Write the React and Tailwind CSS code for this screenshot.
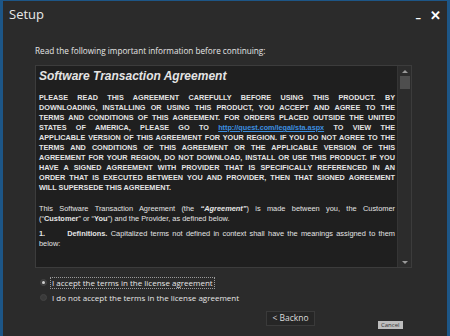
import React from 'react';

const J = ({ children, last = false, className = '' }) => (
  <div className={`whitespace-nowrap text-justify ${last ? '' : '[text-align-last:justify]'} ${className}`}>{children}</div>
);

const Radio = ({ checked, label }) => (
  <div className="flex items-center h-[15px]">
    <span className="w-[7px] h-[7px] rounded-full bg-[#3a3a3a] border border-[#444] flex items-center justify-center">
      {checked && <span className="w-[3px] h-[3px] rounded-full bg-[#cfcfcf]" />}
    </span>
    <span className={`ml-[4px] text-[8px] text-[#e6e6e6] leading-[10px] px-[1px] ${checked ? 'outline outline-1 outline-dotted outline-[#9a9a9a]' : ''}`}>
      {label}
    </span>
  </div>
);

export default function App() {
  return (
    <div className="w-[450px] h-[336px] bg-[#2b2b2b] border-l-[3px] border-r-[3px] border-t border-[#1d5687] flex flex-col overflow-hidden" style={{ fontFamily: '"Open Sans", "Noto Sans", sans-serif' }}>
      {/* title bar */}
      <div className="h-[28px] flex items-center justify-between pl-[6px] pr-[6px]">
        <span className="text-[13px] text-[#e8e8e8]">Setup</span>
        <div className="flex items-center gap-[9px] text-white font-bold">
          <span className="text-[11px] leading-none mt-[3px]">–</span>
          <span className="text-[13px] leading-none">✕</span>
        </div>
      </div>

      <div className="pl-[32px] pr-[35px] flex flex-col">
        <div className="text-[8.2px] text-[#e6e6e6] h-[14px] mt-[15px] leading-[14px]">Read the following important information before continuing:</div>

        {/* agreement box */}
        <div className="mt-[7px] h-[203px] bg-[#1f1f1f] border border-[#3c3c3c] flex" style={{ fontFamily: '"Liberation Sans", Arial, sans-serif' }}>
          <div className="flex-1 min-w-0 pl-[3px] pr-[2px] pt-[2px] text-[#e4e4e4] overflow-hidden">
            <div className="text-[12px] font-bold italic h-[17px] leading-[17px]">Software Transaction Agreement</div>
            <div className="mt-[8px] text-[7.25px] font-bold leading-[10px]">
              <J>PLEASE READ THIS AGREEMENT CAREFULLY BEFORE USING THIS PRODUCT. BY</J>
              <J>DOWNLOADING, INSTALLING OR USING THIS PRODUCT, YOU ACCEPT AND AGREE TO THE</J>
              <J>TERMS AND CONDITIONS OF THIS AGREEMENT. FOR ORDERS PLACED OUTSIDE THE UNITED</J>
              <J>STATES OF AMERICA, PLEASE GO TO <span className="text-[#3d8fe0] underline">http://quest.com/legal/sta.aspx</span> TO VIEW THE</J>
              <J>APPLICABLE VERSION OF THIS AGREEMENT FOR YOUR REGION. IF YOU DO NOT AGREE TO THE</J>
              <J>TERMS AND CONDITIONS OF THIS AGREEMENT OR THE APPLICABLE VERSION OF THIS</J>
              <J>AGREEMENT FOR YOUR REGION, DO NOT DOWNLOAD, INSTALL OR USE THIS PRODUCT. IF YOU</J>
              <J>HAVE A SIGNED AGREEMENT WITH PROVIDER THAT IS SPECIFICALLY REFERENCED IN AN</J>
              <J>ORDER THAT IS EXECUTED BETWEEN YOU AND PROVIDER, THEN THAT SIGNED AGREEMENT</J>
              <J last>WILL SUPERSEDE THIS AGREEMENT.</J>
            </div>
            <div className="mt-[11px] text-[7.4px] leading-[10px]">
              <J>This Software Transaction Agreement (the <b><i>“Agreement”</i></b>) is made between you, the Customer</J>
              <J last>(“<b>Customer</b>” or “<b>You</b>”) and the Provider, as defined below.</J>
            </div>
            <div className="mt-[5px] text-[7.4px] leading-[10px]">
              <J><b>1.</b><span className="inline-block w-[22px]" /><b>Definitions.</b> Capitalized terms not defined in context shall have the meanings assigned to them</J>
              <J last>below:</J>
            </div>
          </div>
          {/* scrollbar */}
          <div className="w-[14px] bg-[#2c2c2c] border-l border-[#353535] flex flex-col items-center">
            <div className="h-[10px] flex items-center justify-center">
              <span className="w-0 h-0 border-l-[3px] border-r-[3px] border-b-[3px] border-l-transparent border-r-transparent border-b-[#9a9a9a]" />
            </div>
            <div className="w-[10px] h-[13px] bg-[#4e4e4e]" />
            <div className="flex-1" />
            <div className="h-[10px] flex items-center justify-center">
              <span className="w-0 h-0 border-l-[3px] border-r-[3px] border-t-[3px] border-l-transparent border-r-transparent border-t-[#9a9a9a]" />
            </div>
          </div>
        </div>

        <div className="mt-[7px] pl-[5px] flex flex-col">
          <Radio checked label="I accept the terms in the license agreement" />
          <Radio label="I do not accept the terms in the license agreement" />
        </div>

        <div className="mt-[6px] flex items-end">
          <div className="ml-[231px] w-[49px] h-[15px] bg-[#262626] border border-[#3a3a3a] flex items-center justify-center text-[8.5px] text-[#dcdcdc]">
            &lt; Backno
          </div>
          <div className="ml-[63px] mb-[-3px] h-[8px] px-[3px] bg-[#bdbdbd] text-[6px] leading-[8px] text-[#333]">Cancel</div>
        </div>
      </div>
    </div>
  );
}
